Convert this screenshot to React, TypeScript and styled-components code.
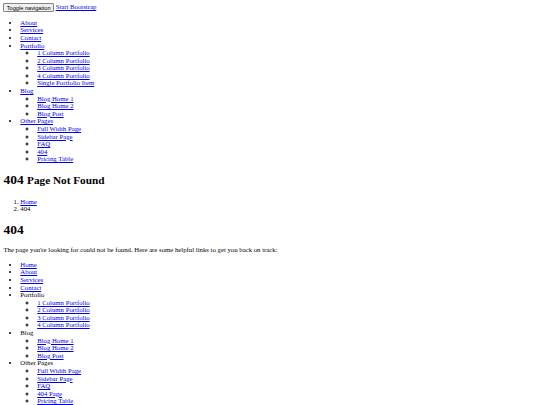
import React from "react";
import styled, { createGlobalStyle } from "styled-components";

// the page is a bare-HTML (no CSS) render shot at 1280 wide and shrunk to 540,
// so every default metric is multiplied by 0.421875
const GlobalStyle = createGlobalStyle`
  body {
    margin: 3.4px;
    background: #fff;
    color: #000;
    font-family: "Liberation Serif", "Times New Roman", serif;
    font-size: 6.75px;
    line-height: 7.6px;
  }
`;

const Nav = styled.nav`
  display: block;
`;

const Header = styled.div`
  height: 8.6px;
  white-space: nowrap;
`;

const ToggleButton = styled.button`
  appearance: none;
  font-family: "Liberation Sans", Arial, sans-serif;
  font-size: 5.63px;
  line-height: 6.6px;
  height: 9px;
  padding: 0.4px 2.4px;
  margin: 0;
  background: #efefef;
  color: #000;
  border: 0.6px solid #858585;
  border-radius: 1px;
  vertical-align: top;
`;

const Brand = styled.a`
  color: #0000ee;
  text-decoration: underline;
  line-height: 8.6px;
`;

const Menu = styled.ul`
  margin: 6.75px 0;
  padding-left: 16.9px;
  list-style: disc;
`;

const SubMenu = styled.ul`
  margin: 0;
  padding-left: 16.9px;
  list-style: circle;
`;

const Item = styled.li`
  line-height: 7.6px;
`;

const Link = styled.a`
  color: #0000ee;
  text-decoration: underline;
`;

const Container = styled.div`
  display: block;
`;

const Heading = styled.h1`
  font-size: 13.5px;
  line-height: 15.5px;
  font-weight: bold;
  margin: 9.05px 0;
`;

const Small = styled.small`
  font-size: smaller;
`;

const Crumbs = styled.ol`
  margin: 6.75px 0;
  padding-left: 16.9px;
  list-style: decimal;
`;

const Text = styled.p`
  margin: 6.75px 0;
`;

type Entry = { label: string; link?: boolean; children?: string[] };

const navItems: Entry[] = [
  { label: "About", link: true },
  { label: "Services", link: true },
  { label: "Contact", link: true },
  {
    label: "Portfolio",
    link: true,
    children: [
      "1 Column Portfolio",
      "2 Column Portfolio",
      "3 Column Portfolio",
      "4 Column Portfolio",
      "Single Portfolio Item",
    ],
  },
  { label: "Blog", link: true, children: ["Blog Home 1", "Blog Home 2", "Blog Post"] },
  {
    label: "Other Pages",
    link: true,
    children: ["Full Width Page", "Sidebar Page", "FAQ", "404", "Pricing Table"],
  },
];

const helpItems: Entry[] = [
  { label: "Home", link: true },
  { label: "About", link: true },
  { label: "Services", link: true },
  { label: "Contact", link: true },
  {
    label: "Portfolio",
    children: [
      "1 Column Portfolio",
      "2 Column Portfolio",
      "3 Column Portfolio",
      "4 Column Portfolio",
    ],
  },
  { label: "Blog", children: ["Blog Home 1", "Blog Home 2", "Blog Post"] },
  {
    label: "Other Pages",
    children: ["Full Width Page", "Sidebar Page", "FAQ", "404 Page", "Pricing Table"],
  },
];

function LinkList({ items }: { items: Entry[] }) {
  return (
    <Menu>
      {items.map((it) => (
        <Item key={it.label}>
          {it.link ? <Link href="#">{it.label}</Link> : it.label}
          {it.children && (
            <SubMenu>
              {it.children.map((c) => (
                <Item key={c}>
                  <Link href="#">{c}</Link>
                </Item>
              ))}
            </SubMenu>
          )}
        </Item>
      ))}
    </Menu>
  );
}

export default function App() {
  return (
    <>
      <GlobalStyle />
      <Nav>
        <Header>
          <ToggleButton type="button">Toggle navigation</ToggleButton>{" "}
          <Brand href="#">Start Bootstrap</Brand>
        </Header>
        <LinkList items={navItems} />
      </Nav>
      <Container>
        <Heading>
          404 <Small>Page Not Found</Small>
        </Heading>
        <Crumbs>
          <Item>
            <Link href="#">Home</Link>
          </Item>
          <Item>404</Item>
        </Crumbs>
        <Heading>404</Heading>
        <Text>
          The page you're looking for could not be found. Here are some helpful links to get you
          back on track:
        </Text>
        <LinkList items={helpItems} />
      </Container>
    </>
  );
}
